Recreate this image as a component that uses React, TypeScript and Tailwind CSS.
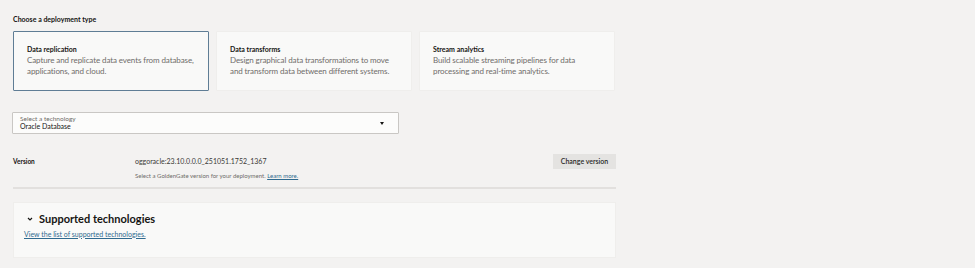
const cards = [
  { title: "Data replication", desc: "Capture and replicate data events from database, applications, and cloud.", selected: true },
  { title: "Data transforms", desc: "Design graphical data transformations to move and transform data between different systems." },
  { title: "Stream analytics", desc: "Build scalable streaming pipelines for data processing and real-time analytics." },
];

export default function App() {
  return (
    <div className="w-[975px] h-[268px] overflow-hidden bg-[#f3f2f1] text-[#161513] font-['Lato',sans-serif]">
      <div className="w-[603px] ml-[13px] pt-[14px]">
        <p className="text-[7px] leading-[10px] font-bold">Choose a deployment type</p>

        {/* Deployment type cards */}
        <div className="mt-[7px] flex gap-[7px]">
          {cards.map((c) => (
            <div
              key={c.title}
              className={
                "w-[196px] h-[60px] rounded-[1px] bg-[#f9f9f8] pl-[13px] pr-[3px] pt-[13px] " +
                (c.selected ? "border-[1.5px] border-[#5f7d95]" : "border border-[#efeeec]")
              }
            >
              <p className="text-[7px] leading-[9px] font-bold">{c.title}</p>
              <p className="max-w-[170px] text-[8px] leading-[11px] text-[#6f6c69] mt-[1px] tracking-[-0.1px]">{c.desc}</p>
            </div>
          ))}
        </div>

        {/* Technology select */}
        <div className="mt-[21px] w-[387px] h-[22px] -ml-[1px] border border-[#c9c7c4] bg-[#fcfcfb] rounded-[1px] flex items-center pl-[7px] pr-[14px]">
          <div className="flex-1">
            <p className="text-[6.5px] leading-[7px] text-[#6f6c69]">Select a technology</p>
            <p className="text-[7px] leading-[9px]">Oracle Database</p>
          </div>
          <svg width="4" height="3" viewBox="0 0 4 3">
            <path d="M0 0h4L2 3z" fill="#161513" />
          </svg>
        </div>

        {/* Version */}
        <div className="mt-[20px] flex items-start">
          <p className="w-[122px] text-[6.5px] leading-[9px] font-bold pt-[3px]">Version</p>
          <div className="flex-1 pt-[3px]">
            <p className="text-[7px] leading-[9px] text-[#3a3936]">oggoracle:23.10.0.0.0_251051.1752_1367</p>
            <p className="text-[6px] leading-[7px] text-[#6f6c69] mt-[6px]">
              Select a GoldenGate version for your deployment.{" "}
              <span className="text-[#2f6a8f] underline">Learn more.</span>
            </p>
          </div>
          <button className="w-[63px] h-[15px] bg-[#e4e3e1] text-[7px] font-semibold text-[#2c2b29]">Change version</button>
        </div>

        <div className="mt-[8px] h-[1.5px] bg-[#e2e0de]" />

        {/* Supported technologies */}
        <div className="mt-[13px] h-[56px] bg-[#f9f9f8] border border-[#efeeec] pl-[10px] pt-[9px]">
          <div className="flex items-center gap-[5px]">
            <svg width="8" height="8" viewBox="0 0 8 8" className="ml-[2px]">
              <path d="M2 3l2 2 2-2" fill="none" stroke="#161513" strokeWidth="1.2" />
            </svg>
            <p className="text-[11px] leading-[14px] font-bold">Supported technologies</p>
          </div>
          <p className="mt-[4px] text-[7px] leading-[8px] text-[#2f6a8f] underline">View the list of supported technologies.</p>
        </div>
      </div>
    </div>
  );
}
